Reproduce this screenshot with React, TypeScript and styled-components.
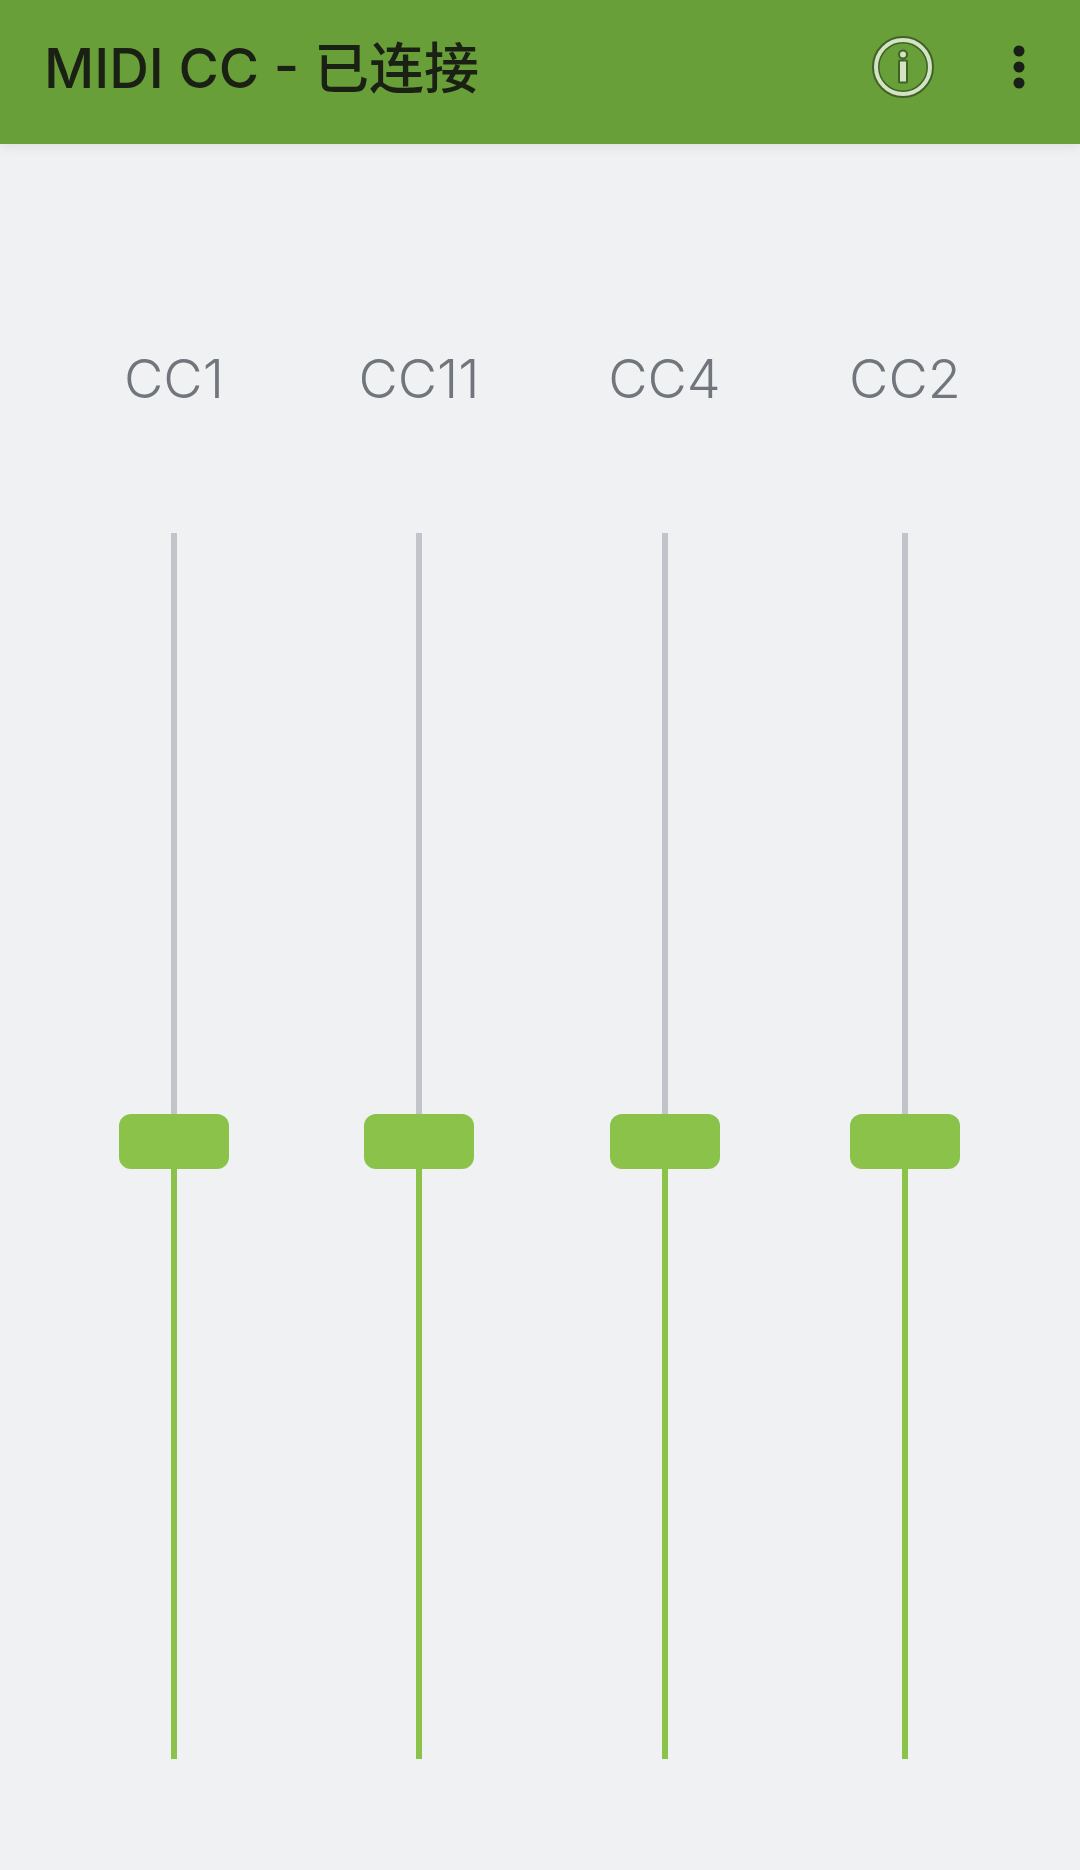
import styled, { createGlobalStyle } from "styled-components";

const GlobalStyle = createGlobalStyle`
  html, body {
    margin: 0;
    padding: 0;
    background: #eff1f3;
  }
`;

const Page = styled.div`
  width: 1080px;
  height: 1870px;
  overflow: hidden;
  background: #eff1f3;
  font-family: Inter, "Noto Sans CJK SC", sans-serif;
`;

const AppBar = styled.header`
  height: 134px;
  display: flex;
  align-items: center;
  padding: 0 55px 10px 44px;
  background: #689f38;
  box-shadow: 0 3px 12px rgba(0, 0, 0, 0.08);
`;

const Title = styled.h1`
  flex: 1;
  margin: 0;
  padding-top: 2px;
  font-size: 55px;
  font-weight: 500;
  line-height: 1;
  color: #1a2114;
  white-space: nowrap;
`;

const Actions = styled.div`
  display: flex;
  align-items: center;
  gap: 78px;
`;

const Mixer = styled.main`
  display: grid;
  grid-template-columns: 244px 246px 245px 236px;
  padding: 203px 0 0 52px;
`;

const Channel = styled.section`
  display: flex;
  flex-direction: column;
  align-items: center;
`;

const Label = styled.div`
  height: 64px;
  margin-bottom: 122px;
  font-size: 54px;
  font-weight: 300;
  line-height: 64px;
  color: #70767c;
`;

const Slider = styled.div`
  display: flex;
  flex-direction: column;
  align-items: center;
`;

const Rail = styled.div<{ $filled?: boolean; $length: number }>`
  width: 6px;
  height: ${(p) => p.$length}px;
  background: ${(p) => (p.$filled ? "#8bc34a" : "#c1c4c8")};
`;

const Thumb = styled.div`
  width: 110px;
  height: 55px;
  border-radius: 12px;
  background: #8bc34a;
`;

const InfoIcon = () => (
  <svg width="64" height="64" viewBox="0 0 64 64" fill="none">
    <circle cx="32" cy="32" r="29.5" stroke="#3f6326" strokeWidth="3" />
    <circle cx="32" cy="32" r="24.5" stroke="#3f6326" strokeWidth="2" />
    <circle cx="32" cy="32" r="27" stroke="#d3e3c4" strokeWidth="4" />
    <circle cx="32" cy="19.5" r="4" fill="#d3e3c4" stroke="#3f6326" strokeWidth="2" />
    <rect x="28" y="25.5" width="8" height="22" rx="1" fill="#d3e3c4" stroke="#3f6326" strokeWidth="2" />
  </svg>
);

const MoreIcon = () => (
  <svg width="12" height="44" viewBox="0 0 12 44" fill="#1a1f17">
    <circle cx="6" cy="6" r="5.5" />
    <circle cx="6" cy="22" r="5.5" />
    <circle cx="6" cy="38" r="5.5" />
  </svg>
);

const channels = ["CC1", "CC11", "CC4", "CC2"];

export default function App() {
  return (
    <Page>
      <GlobalStyle />
      <AppBar>
        <Title>MIDI CC - 已连接</Title>
        <Actions>
          <InfoIcon />
          <MoreIcon />
        </Actions>
      </AppBar>
      <Mixer>
        {channels.map((name) => (
          <Channel key={name}>
            <Label>{name}</Label>
            <Slider>
              <Rail $length={581} />
              <Thumb />
              <Rail $filled $length={590} />
            </Slider>
          </Channel>
        ))}
      </Mixer>
    </Page>
  );
}
